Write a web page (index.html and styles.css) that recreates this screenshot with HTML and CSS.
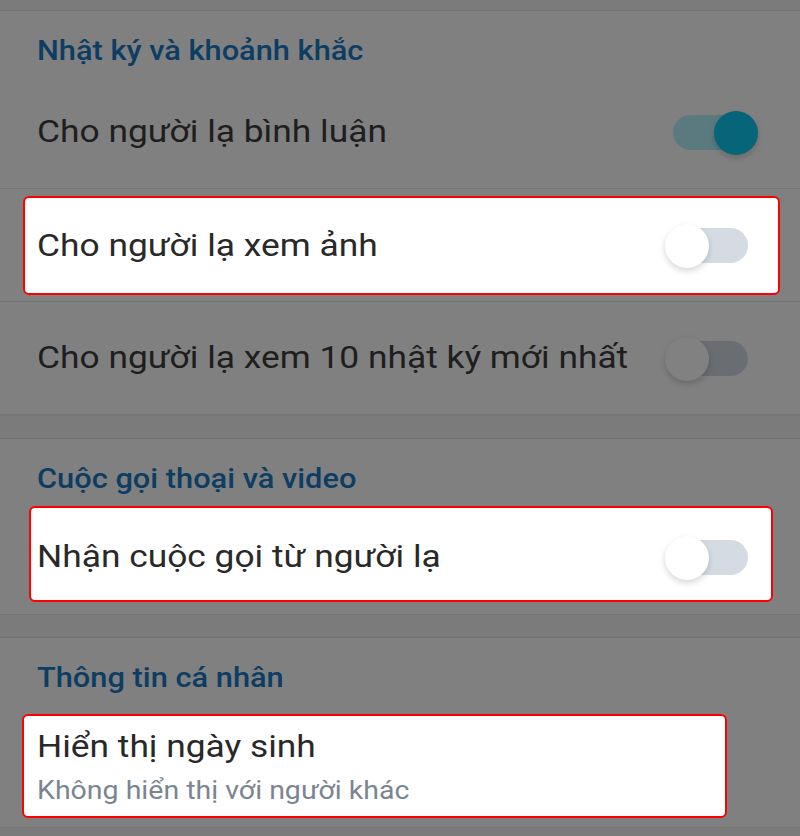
FILE: index.html
```html
<!DOCTYPE html>
<html lang="vi">
<head>
  <meta charset="UTF-8">
  <meta name="viewport" content="width=device-width, initial-scale=1.0">
  <title>Quyền riêng tư</title>
  <link rel="stylesheet" href="styles.css">
</head>
<body>
  <div class="screen">
    <div class="band band-top"></div>

    <section class="group">
      <h2 class="group-title">Nhật ký và khoảnh khắc</h2>
      <div class="row">
        <span class="label">Cho người lạ bình luận</span>
        <span class="switch on"></span>
      </div>
      <div class="row row-marked">
        <div class="card card-one">
          <span class="label">Cho người lạ xem ảnh</span>
          <span class="switch"></span>
        </div>
      </div>
      <div class="row">
        <span class="label">Cho người lạ xem 10 nhật ký mới nhất</span>
        <span class="switch"></span>
      </div>
    </section>

    <div class="band"></div>

    <section class="group">
      <h2 class="group-title">Cuộc gọi thoại và video</h2>
      <div class="row row-marked row-last">
        <div class="card card-two">
          <span class="label">Nhận cuộc gọi từ người lạ</span>
          <span class="switch"></span>
        </div>
      </div>
    </section>

    <div class="band"></div>

    <section class="group">
      <h2 class="group-title">Thông tin cá nhân</h2>
      <div class="card card-three">
        <div class="label">Hiển thị ngày sinh</div>
        <div class="sub">Không hiển thị với người khác</div>
      </div>
    </section>

    <div class="band"></div>
  </div>
</body>
</html>
```

FILE: styles.css
```css
/* Base */
body {
    margin: 0;
    padding: 0;
    font-family: Roboto, "Noto Sans", Arial, sans-serif;
    background-color: #808080;
}

.screen {
    width: 800px;
    height: 836px;
    overflow: hidden;
    background-color: #808080;
}

/* Section gaps */
.band {
    height: 22px;
    background-color: #7b7b7b;
    border-top: 1px solid #767676;
    border-bottom: 1px solid #737373;
}

.band-top {
    height: 10px;
    border-top: none;
}

/* Groups - the capture is a little wider than the app, so text is stretched */
.group-title {
    margin: 0 0 0 37px;
    padding: 23px 0 8px;
    font-size: 27px;
    line-height: 34px;
    font-weight: 500;
    color: #0d3d63;
    transform: scaleX(1.14);
    transform-origin: left center;
}

.row {
    display: flex;
    align-items: center;
    justify-content: space-between;
    height: 112px;
    padding: 0 52px 0 37px;
    border-bottom: 1px solid #757575;
}

.row-marked {
    align-items: flex-start;
    padding: 0;
}

.row-last {
    height: 110px;
    border-bottom: none;
}

.label {
    display: inline-block;
    font-size: 31px;
    line-height: 38px;
    color: #1e1e1e;
    transform: scaleX(1.14);
    transform-origin: left center;
}

/* Highlight boxes */
.card {
    display: flex;
    align-items: center;
    justify-content: space-between;
    background-color: #ffffff;
    border: 2px solid #ff0000;
    border-radius: 6px;
}

.card .label {
    color: #292929;
}

.card-one {
    flex: 1;
    height: 95px;
    margin: 7px 20px 0 23px;
    padding: 0 30px 0 12px;
}

.card-two {
    flex: 1;
    height: 86px;
    margin: 2px 27px 0 29px;
    padding: 6px 23px 0 6px;
}

.card-three {
    display: block;
    margin: 11px 73px 9px 22px;
    padding: 12px 0 10px 13px;
}

.sub {
    margin-top: 10px;
    font-size: 25px;
    line-height: 30px;
    color: #7b8591;
    transform: scaleX(1.14);
    transform-origin: left center;
}

/* Switches */
.switch {
    position: relative;
    flex: none;
    width: 75px;
    height: 35px;
    border-radius: 18px;
    background-color: #6a6e72;
}

.switch::after {
    content: "";
    position: absolute;
    top: -4px;
    left: -8px;
    width: 44px;
    height: 44px;
    border-radius: 50%;
    background-color: #818181;
    box-shadow: 0 3px 6px rgba(0, 0, 0, 0.18);
}

.switch.on {
    background-color: #5b7a80;
}

.switch.on::after {
    left: 41px;
    background-color: #07657a;
}

.card .switch {
    background-color: #d4dbe2;
}

.card .switch::after {
    background-color: #ffffff;
    box-shadow: 0 3px 6px rgba(0, 0, 0, 0.16);
}
```
